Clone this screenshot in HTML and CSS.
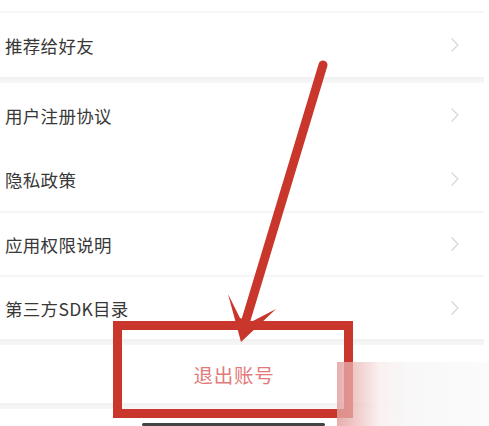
FILE: index.html
```html
<!DOCTYPE html>
<html lang="zh-CN">
<head>
  <meta charset="UTF-8">
  <meta name="viewport" content="width=device-width, initial-scale=1.0">
  <title>设置</title>
  <link rel="stylesheet" href="styles.css">
</head>
<body>
  <div class="page">
    <div class="top-line"></div>

    <div class="group">
      <div class="item">
        <span>推荐给好友</span>
        <svg class="chev" width="10" height="16" viewBox="0 0 10 16"><polyline points="1.5,1.5 8,8 1.5,14.5"/></svg>
      </div>
    </div>

    <div class="gap"></div>

    <div class="group">
      <div class="item">
        <span>用户注册协议</span>
        <svg class="chev" width="10" height="16" viewBox="0 0 10 16"><polyline points="1.5,1.5 8,8 1.5,14.5"/></svg>
      </div>
      <div class="item">
        <span>隐私政策</span>
        <svg class="chev" width="10" height="16" viewBox="0 0 10 16"><polyline points="1.5,1.5 8,8 1.5,14.5"/></svg>
      </div>
      <div class="item divided">
        <span>应用权限说明</span>
        <svg class="chev" width="10" height="16" viewBox="0 0 10 16"><polyline points="1.5,1.5 8,8 1.5,14.5"/></svg>
      </div>
      <div class="item divided">
        <span>第三方SDK目录</span>
        <svg class="chev" width="10" height="16" viewBox="0 0 10 16"><polyline points="1.5,1.5 8,8 1.5,14.5"/></svg>
      </div>
    </div>

    <div class="gap"></div>

    <div class="group">
      <div class="logout">退出账号</div>
    </div>

    <div class="gap"></div>

    <div class="home-bar"></div>
  </div>

  <!-- annotation drawn over the screenshot -->
  <svg class="marks" width="489" height="426" viewBox="0 0 489 426">
    <line x1="323" y1="65" x2="246" y2="320" stroke="#c8362c" stroke-width="9" stroke-linecap="round"/>
    <polygon points="241,342 228,294 240,318 251,322 276,309" fill="#c8362c"/>
    <rect x="117.5" y="325.5" width="231" height="88" fill="none" stroke="#c8362c" stroke-width="9"/>
  </svg>
  <div class="stamp"></div>
</body>
</html>
```

FILE: styles.css
```css
* {
  box-sizing: border-box;
}

body {
  margin: 0;
  background: #fff;
  font-family: "Noto Sans CJK SC", "Noto Sans", sans-serif;
  width: 489px;
  height: 426px;
  overflow: hidden;
  position: relative;
}

.page {
  width: 484px;
}

.top-line {
  margin-top: 11px;
  height: 2px;
  background: #f6f6f6;
}

.group {
  background: #fff;
}

.item {
  height: 64px;
  display: flex;
  align-items: center;
  justify-content: space-between;
  padding: 0 24px 0 5px;
  font-size: 17.5px;
  color: #383838;
}

.item span {
  letter-spacing: 0.3px;
}

.item.divided {
  border-top: 2px solid #f5f5f5;
}

.chev polyline {
  fill: none;
  stroke: #d6d6d6;
  stroke-width: 1.2;
}

.gap {
  height: 6px;
  background: linear-gradient(#f1f1f1, #f7f7f7);
}

.logout {
  height: 58px;
  display: flex;
  align-items: center;
  justify-content: center;
  padding-right: 16px;
  font-size: 19.5px;
  color: #e27a7b;
  letter-spacing: 0.8px;
}

.home-bar {
  margin: 14px 0 0 142px;
  width: 183px;
  height: 3px;
  border-radius: 2px;
  background: #444;
}

.marks {
  position: absolute;
  left: 0;
  top: 0;
}

.stamp {
  position: absolute;
  left: 337px;
  top: 362px;
  width: 152px;
  height: 64px;
  background: linear-gradient(to right,
    rgba(226, 160, 158, 0.85) 0%,
    rgba(232, 178, 176, 0.75) 10%,
    rgba(250, 240, 240, 0.95) 28%,
    #f8f8f8 50%,
    #fbfbfb 100%);
}
```
